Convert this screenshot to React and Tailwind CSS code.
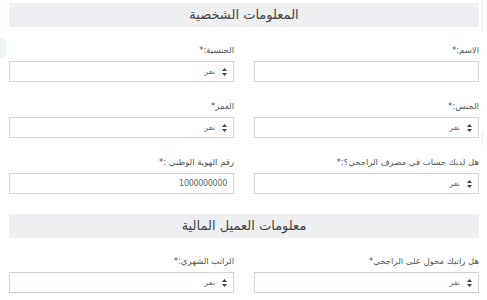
import React from 'react';

// Customer info form (RTL). Two sections, each a grey title bar over a
// two-column grid of labelled fields.

const PERSONAL = [
  { label: 'الاسم:*', type: 'text' },
  { label: 'الجنسية:*', type: 'select' },
  { label: 'الجنس:*', type: 'select' },
  { label: 'العمر*', type: 'select' },
  { label: 'هل لديك حساب في مصرف الراجحي؟:*', type: 'select' },
  { label: 'رقم الهوية الوطني :*', type: 'text', value: '1000000000' },
];

const FINANCE = [
  { label: 'هل راتبك محول على الراجحي*', type: 'select' },
  { label: 'الراتب الشهري:*', type: 'select' },
];

function Arrows() {
  return (
    <svg width="5" height="8" viewBox="0 0 5 8" className="shrink-0">
      <path d="M2.5 0 L5 3 H0 Z M2.5 8 L5 5 H0 Z" fill="#444" />
    </svg>
  );
}

function Field({ f }) {
  return (
    <div className="flex flex-col">
      <label className="text-[8.5px] leading-[12px] text-[#555] mb-[5px]">{f.label}</label>
      <div className="h-[21px] border border-[#cfd3d6] bg-white flex items-center px-[6px] gap-[7px] text-[8px] text-[#666]">
        {f.type === 'select' && (
          <>
            <Arrows />
            <span>نفر</span>
          </>
        )}
        {f.type === 'text' && f.value && <span className="text-[8px] text-[#666] tracking-[-0.3px]">{f.value}</span>}
      </div>
    </div>
  );
}

function Section({ title, fields }) {
  return (
    <>
      <div className="h-[24px] bg-[#eeeff0] flex items-center justify-center text-[13px] text-[#444]">
        {title}
      </div>
      <div className="grid grid-cols-2 gap-x-[20px] gap-y-[18px] mt-[17px]">
        {fields.map((f) => (
          <Field key={f.label} f={f} />
        ))}
      </div>
    </>
  );
}

export default function App() {
  return (
    <div dir="rtl" className="relative w-[487px] h-[300px] overflow-hidden bg-white" style={{ fontFamily: '"DejaVu Sans", sans-serif' }}>
      <div className="absolute left-0 top-[38px] w-[6px] h-[20px] bg-[#eef4f3] rounded-r-[3px]" />
      <div className="absolute left-[482px] top-0 h-[30px] border-l border-dotted border-[#dde3e3]" />
      <div className="absolute left-[482px] top-[132px] h-[14px] border-l border-dotted border-[#dde8e6]" />
      <div className="pr-[8px] pl-[9px] pt-[3px]">
        <Section title="المعلومات الشخصية" fields={PERSONAL} />
        <div className="mt-[20px]">
          <Section title="معلومات العميل المالية" fields={FINANCE} />
        </div>
      </div>
    </div>
  );
}
